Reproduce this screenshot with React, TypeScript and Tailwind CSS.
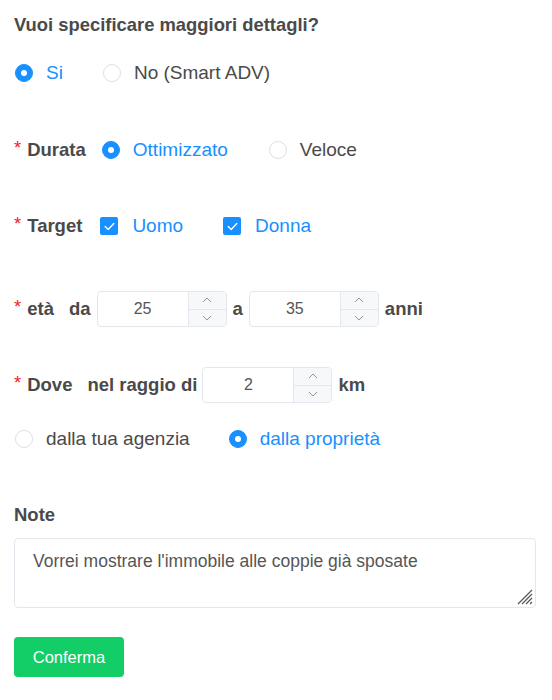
import { useState } from "react";

function Radio({ checked, label }: { checked: boolean; label: string }) {
  return (
    <label className="flex items-center cursor-pointer">
      <span
        className={`w-[18px] h-[18px] rounded-full flex items-center justify-center ${
          checked ? "bg-[#1890ff] border border-[#1890ff]" : "bg-white border border-[#dcdfe6]"
        }`}
      >
        {checked && <span className="w-[6px] h-[6px] rounded-full bg-white" />}
      </span>
      <span className={`ml-[13px] text-[19px] ${checked ? "text-[#1890ff]" : "text-[#4a4a4a]"}`}>{label}</span>
    </label>
  );
}

function Check({ label }: { label: string }) {
  return (
    <label className="flex items-center cursor-pointer">
      <span className="w-[18px] h-[18px] rounded-[2px] bg-[#1890ff] flex items-center justify-center">
        <svg width="11" height="9" viewBox="0 0 11 9" fill="none">
          <path d="M1.2 4.6 L4.2 7.4 L9.8 1.4" stroke="white" strokeWidth="1.4" strokeLinecap="round" strokeLinejoin="round" />
        </svg>
      </span>
      <span className="ml-[14px] text-[19px] text-[#1890ff]">{label}</span>
    </label>
  );
}

function NumberInput({ value }: { value: number }) {
  return (
    <div className="flex w-[130px] h-9 border border-[#e4e7ed] rounded-[4px] overflow-hidden bg-white">
      <div className="flex-1 flex items-center justify-center text-[16px] font-normal text-[#555]">{value}</div>
      <div className="w-[38px] flex flex-col border-l border-[#e4e7ed] bg-[#f7f8fa]">
        <div className="flex-1 flex items-center justify-center border-b border-[#e4e7ed]">
          <svg width="10" height="6" viewBox="0 0 10 6" fill="none">
            <path d="M1 5 L5 1 L9 5" stroke="#8f959e" strokeWidth="1" />
          </svg>
        </div>
        <div className="flex-1 flex items-center justify-center">
          <svg width="10" height="6" viewBox="0 0 10 6" fill="none">
            <path d="M1 1 L5 5 L9 1" stroke="#8f959e" strokeWidth="1" />
          </svg>
        </div>
      </div>
    </div>
  );
}

function Req({ children }: { children: React.ReactNode }) {
  return (
    <span className="flex items-center font-bold text-[#4a4a4a] text-[18.5px]">
      <span className="text-[#f5222d] font-normal mr-[6px] self-start leading-[24px]">*</span>
      {children}
    </span>
  );
}

export default function App() {
  const [note, setNote] = useState("Vorrei mostrare l'immobile alle coppie già sposate");

  return (
    <div
      className="w-[552px] h-[700px] bg-white pl-[14px] pt-[13px] text-[#4a4a4a]"
      style={{ fontFamily: '"Liberation Sans", Arial, sans-serif' }}
    >
      <h2 className="h-6 leading-6 text-[18.4px] font-bold text-[#4a4a4a]">Vuoi specificare maggiori dettagli?</h2>

      {/* si / no */}
      <div className="mt-6 h-6 flex items-center pl-[1px]">
        <Radio checked label="Si" />
        <div className="ml-[40px]">
          <Radio checked={false} label="No (Smart ADV)" />
        </div>
      </div>

      {/* durata */}
      <div className="mt-[53px] h-6 flex items-center">
        <Req>Durata</Req>
        <div className="ml-[16px] flex items-center">
          <Radio checked label="Ottimizzato" />
          <div className="ml-[41px]">
            <Radio checked={false} label="Veloce" />
          </div>
        </div>
      </div>

      {/* target */}
      <div className="mt-[52px] h-6 flex items-center">
        <Req>Target</Req>
        <div className="ml-[18px] flex items-center">
          <Check label="Uomo" />
          <div className="ml-[40px]">
            <Check label="Donna" />
          </div>
        </div>
      </div>

      {/* eta */}
      <div className="mt-[53px] h-9 flex items-center text-[18.5px] font-bold text-[#4a4a4a]">
        <Req>età</Req>
        <span className="ml-[15px] mr-[6px]">da</span>
        <NumberInput value={25} />
        <span className="ml-[6px] mr-[6px]">a</span>
        <NumberInput value={35} />
        <span className="ml-[6px]">anni</span>
      </div>

      {/* dove */}
      <div className="mt-10 h-9 flex items-center text-[18.5px] font-bold text-[#4a4a4a]">
        <Req>Dove</Req>
        <span className="ml-[15px] mr-[5px]">nel raggio di</span>
        <NumberInput value={2} />
        <span className="ml-[6px]">km</span>
      </div>

      <div className="mt-6 h-6 flex items-center pl-[1px]">
        <Radio checked={false} label="dalla tua agenzia" />
        <div className="ml-[39px]">
          <Radio checked label="dalla proprietà" />
        </div>
      </div>

      {/* note */}
      <div className="mt-[52px] h-6 leading-6 text-[18.5px] font-bold text-[#4a4a4a]">Note</div>
      <div className="relative mt-[11px] w-[522px]">
        <textarea
          value={note}
          onChange={(e) => setNote(e.target.value)}
          className="block w-full h-[70px] border border-[#e4e7ed] rounded-[4px] px-[18px] py-[10px] text-[17.5px] leading-6 text-[#555] outline-none resize-none"
          style={{ fontFamily: '"Liberation Sans", Arial, sans-serif' }}
        />
        <svg className="absolute right-[3px] bottom-[3px] pointer-events-none" width="18" height="18" viewBox="0 0 18 18">
          <path d="M17 3 L3 17 M17 7 L7 17 M17 11 L11 17 M17 15 L15 17" stroke="#555" strokeWidth="1.2" />
        </svg>
      </div>

      <button
        type="button"
        className="mt-[29px] w-[110px] h-10 rounded-[4px] bg-[#13ce66] text-white text-[16.5px]"
      >
        Conferma
      </button>
    </div>
  );
}
